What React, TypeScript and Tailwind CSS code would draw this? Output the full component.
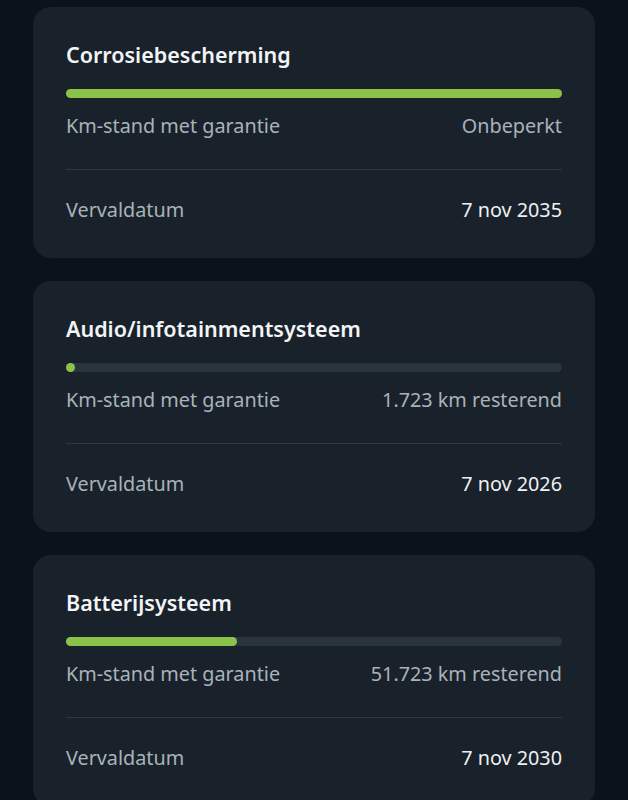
import React from 'react';

interface Warranty {
  title: string;
  progress: number;
  mileage: string;
  expiry: string;
}

const warranties: Warranty[] = [
  { title: 'Corrosiebescherming', progress: 100, mileage: 'Onbeperkt', expiry: '7 nov 2035' },
  { title: 'Audio/infotainmentsysteem', progress: 0, mileage: '1.723 km resterend', expiry: '7 nov 2026' },
  { title: 'Batterijsysteem', progress: 34.5, mileage: '51.723 km resterend', expiry: '7 nov 2030' },
];

const WarrantyCard: React.FC<{ item: Warranty }> = ({ item }) => (
  <div className="bg-[#19222b] rounded-[18px] px-[33px] pt-[35px] pb-[36px]">
    <h2 className="text-[21.5px] leading-[26px] font-semibold text-[#f2f4f5]">{item.title}</h2>

    {/* progress bar */}
    <div className="mt-[21px] h-[9px] rounded-full bg-[#2a343e] relative">
      <div
        className="absolute left-0 top-0 h-full rounded-full bg-[#8bc34a] min-w-[9px]"
        style={{ width: `${item.progress}%` }}
      />
    </div>

    <div className="mt-[16px] flex justify-between items-center text-[19.8px] leading-[24px]">
      <span className="text-[#a9b2ba]">Km-stand met garantie</span>
      <span className="text-[#a9b2ba]">{item.mileage}</span>
    </div>

    <div className="mt-[31px] h-px bg-[#2e3943]" />

    <div className="mt-[28px] flex justify-between items-center text-[19.8px] leading-[24px]">
      <span className="text-[#a9b2ba]">Vervaldatum</span>
      <span className="text-[#eef0f2]">{item.expiry}</span>
    </div>
  </div>
);

export default function App() {
  return (
    <div
      className="min-h-screen bg-[#0a131b] px-[33px] pt-[7px] pb-8 flex flex-col gap-[23px]"
      style={{ fontFamily: '"Noto Sans", "Open Sans", sans-serif' }}
    >
      {warranties.map((w) => (
        <WarrantyCard key={w.title} item={w} />
      ))}
    </div>
  );
}
